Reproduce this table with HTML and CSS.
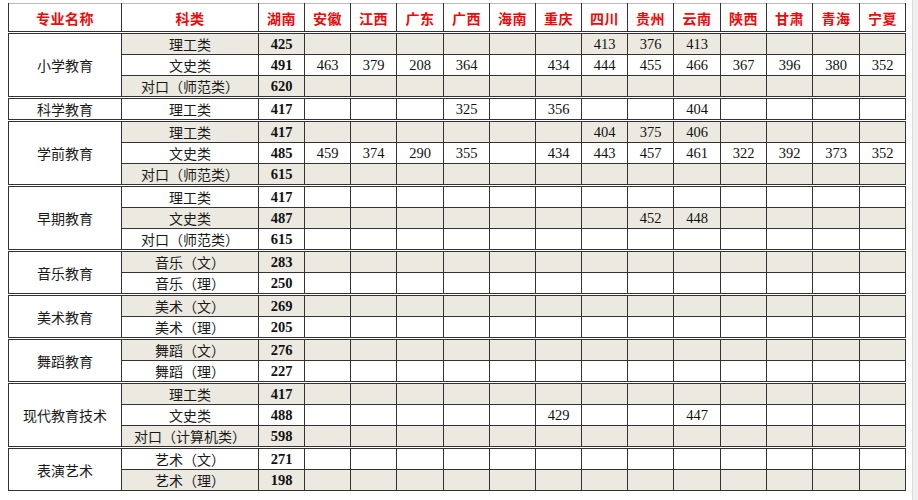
FILE: index.html
```html
<!DOCTYPE html>
<html lang="zh">
<head>
<meta charset="utf-8">
<title>录取分数线</title>
<link rel="stylesheet" href="styles.css">
</head>
<body>
<div class="edge"></div>
<table class="score">
<colgroup>
<col class="c-name"><col class="c-type">
<col class="c-p"><col class="c-p"><col class="c-p"><col class="c-p47"><col class="c-p"><col class="c-p"><col class="c-p"><col class="c-p"><col class="c-p"><col class="c-p47"><col class="c-p"><col class="c-p"><col class="c-p47"><col class="c-p">
</colgroup>
<thead>
<tr><th>专业名称</th><th>科类</th><th>湖南</th><th>安徽</th><th>江西</th><th>广东</th><th>广西</th><th>海南</th><th>重庆</th><th>四川</th><th>贵州</th><th>云南</th><th>陕西</th><th>甘肃</th><th>青海</th><th>宁夏</th></tr>
</thead>
<tbody>
<tr class="g"><td class="name" rowspan="3">小学教育</td><td class="t">理工类</td><td class="hn">425</td><td></td><td></td><td></td><td></td><td></td><td></td><td>413</td><td>376</td><td>413</td><td></td><td></td><td></td><td></td></tr>
<tr><td class="t">文史类</td><td class="hn">491</td><td>463</td><td>379</td><td>208</td><td>364</td><td></td><td>434</td><td>444</td><td>455</td><td>466</td><td>367</td><td>396</td><td>380</td><td>352</td></tr>
<tr class="g"><td class="t">对口（师范类）</td><td class="hn">620</td><td></td><td></td><td></td><td></td><td></td><td></td><td></td><td></td><td></td><td></td><td></td><td></td><td></td></tr>

<tr class="sep"><td class="name">科学教育</td><td class="t">理工类</td><td class="hn">417</td><td></td><td></td><td></td><td>325</td><td></td><td>356</td><td></td><td></td><td>404</td><td></td><td></td><td></td><td></td></tr>

<tr class="g sep"><td class="name" rowspan="3">学前教育</td><td class="t">理工类</td><td class="hn">417</td><td></td><td></td><td></td><td></td><td></td><td></td><td>404</td><td>375</td><td>406</td><td></td><td></td><td></td><td></td></tr>
<tr><td class="t">文史类</td><td class="hn">485</td><td>459</td><td>374</td><td>290</td><td>355</td><td></td><td>434</td><td>443</td><td>457</td><td>461</td><td>322</td><td>392</td><td>373</td><td>352</td></tr>
<tr class="g"><td class="t">对口（师范类）</td><td class="hn">615</td><td></td><td></td><td></td><td></td><td></td><td></td><td></td><td></td><td></td><td></td><td></td><td></td><td></td></tr>

<tr class="sep"><td class="name" rowspan="3">早期教育</td><td class="t">理工类</td><td class="hn">417</td><td></td><td></td><td></td><td></td><td></td><td></td><td></td><td></td><td></td><td></td><td></td><td></td><td></td></tr>
<tr class="g"><td class="t">文史类</td><td class="hn">487</td><td></td><td></td><td></td><td></td><td></td><td></td><td></td><td>452</td><td>448</td><td></td><td></td><td></td><td></td></tr>
<tr><td class="t">对口（师范类）</td><td class="hn">615</td><td></td><td></td><td></td><td></td><td></td><td></td><td></td><td></td><td></td><td></td><td></td><td></td><td></td></tr>

<tr class="g sep"><td class="name" rowspan="2">音乐教育</td><td class="t">音乐（文）</td><td class="hn">283</td><td></td><td></td><td></td><td></td><td></td><td></td><td></td><td></td><td></td><td></td><td></td><td></td><td></td></tr>
<tr><td class="t">音乐（理）</td><td class="hn">250</td><td></td><td></td><td></td><td></td><td></td><td></td><td></td><td></td><td></td><td></td><td></td><td></td><td></td></tr>

<tr class="g sep"><td class="name" rowspan="2">美术教育</td><td class="t">美术（文）</td><td class="hn">269</td><td></td><td></td><td></td><td></td><td></td><td></td><td></td><td></td><td></td><td></td><td></td><td></td><td></td></tr>
<tr><td class="t">美术（理）</td><td class="hn">205</td><td></td><td></td><td></td><td></td><td></td><td></td><td></td><td></td><td></td><td></td><td></td><td></td><td></td></tr>

<tr class="g sep"><td class="name" rowspan="2">舞蹈教育</td><td class="t">舞蹈（文）</td><td class="hn">276</td><td></td><td></td><td></td><td></td><td></td><td></td><td></td><td></td><td></td><td></td><td></td><td></td><td></td></tr>
<tr><td class="t">舞蹈（理）</td><td class="hn">227</td><td></td><td></td><td></td><td></td><td></td><td></td><td></td><td></td><td></td><td></td><td></td><td></td><td></td></tr>

<tr class="g sep"><td class="name" rowspan="3">现代教育技术</td><td class="t">理工类</td><td class="hn">417</td><td></td><td></td><td></td><td></td><td></td><td></td><td></td><td></td><td></td><td></td><td></td><td></td><td></td></tr>
<tr><td class="t">文史类</td><td class="hn">488</td><td></td><td></td><td></td><td></td><td></td><td>429</td><td></td><td></td><td>447</td><td></td><td></td><td></td><td></td></tr>
<tr class="g"><td class="t">对口（计算机类）</td><td class="hn">598</td><td></td><td></td><td></td><td></td><td></td><td></td><td></td><td></td><td></td><td></td><td></td><td></td><td></td></tr>

<tr class="sep"><td class="name" rowspan="2">表演艺术</td><td class="t">艺术（文）</td><td class="hn">271</td><td></td><td></td><td></td><td></td><td></td><td></td><td></td><td></td><td></td><td></td><td></td><td></td><td></td></tr>
<tr class="g"><td class="t">艺术（理）</td><td class="hn">198</td><td></td><td></td><td></td><td></td><td></td><td></td><td></td><td></td><td></td><td></td><td></td><td></td><td></td></tr>
</tbody>
</table>
</body>
</html>
```
FILE: styles.css
```css
html, body {
  margin: 0;
  padding: 0;
  background: #fff;
}
body {
  padding: 3px 0 0 8px;
  font-family: "Liberation Serif", "Noto Sans CJK SC", serif;
  color: #111;
}
.edge {
  position: fixed;
  top: 0;
  right: 0;
  width: 5px;
  height: 100%;
  background: #efefef;
  border-left: 1px solid #dcdcdc;
}
.score {
  border-collapse: collapse;
  table-layout: fixed;
  width: 898px;
  border-top: 1px solid #b8b8b8;
  border-left: 1px solid #8a8a8a;
  border-right: 1px solid #333;
  border-bottom: 1px solid #333;
}
.c-name { width: 113px; }
.c-type { width: 137px; }
.c-p { width: 46px; }
.c-p47 { width: 47px; }
.score th,
.score td {
  padding: 0;
  text-align: center;
  vertical-align: middle;
  white-space: nowrap;
  overflow: hidden;
}
.score th {
  height: 27px;
  font-family: "Noto Sans CJK SC", sans-serif;
  font-weight: 700;
  font-size: 14px;
  color: #ee0a0a;
  border-left: 1px solid #333;
  border-right: 1px solid #333;
  border-bottom: 3px double #333;
  letter-spacing: 0.5px;
}
.score td {
  height: 20px;
  font-size: 14.5px;
  border: 1px solid #333;
  line-height: 18px;
}
.score tr.g td {
  background: #ebe9e0;
}
.score tr.g td.name {
  background: #fff;
}
.score tr.sep td {
  border-top: 3px double #333;
}
.score td.name,
.score td.t {
  font-family: "Noto Sans CJK SC", sans-serif;
  font-size: 14px;
  color: #1a1a1a;
}
.score td.hn {
  font-weight: 700;
}
```
